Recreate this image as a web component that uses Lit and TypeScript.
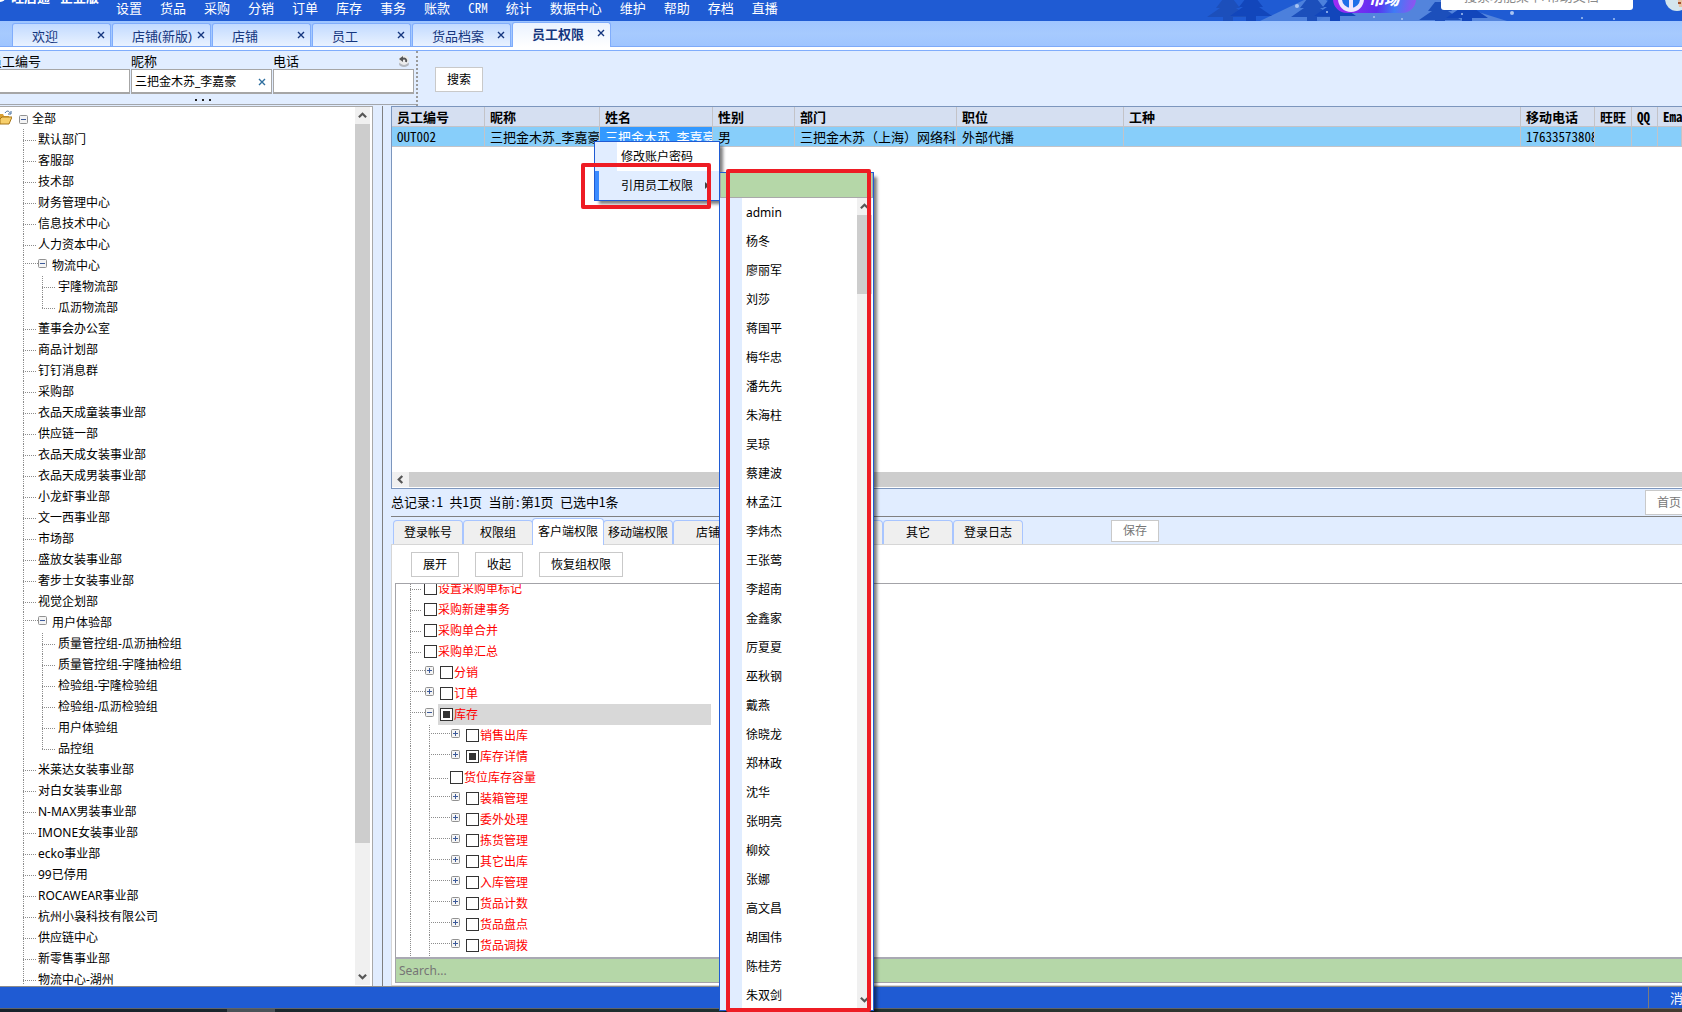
import { LitElement, html, css, svg, nothing } from "lit";
import { customElement, property } from "lit/decorators.js";
import { classMap } from "lit/directives/class-map.js";

interface Dept {
  name: string;
  children?: string[];
}

interface Perm {
  name: string;
  level: number;
  toggle?: "plus" | "minus";
  partial?: boolean;
  selected?: boolean;
}

const MENUS = ["设置", "货品", "采购", "分销", "订单", "库存", "事务", "账款", "CRM", "统计", "数据中心", "维护", "帮助", "存档", "直播"];
const PAGES = ["欢迎", "店铺(新版)", "店铺", "员工", "货品档案", "员工权限"];

const DEPTS: Dept[] = [
  { name: "默认部门" },
  { name: "客服部" },
  { name: "技术部" },
  { name: "财务管理中心" },
  { name: "信息技术中心" },
  { name: "人力资本中心" },
  { name: "物流中心", children: ["宇隆物流部", "瓜沥物流部"] },
  { name: "董事会办公室" },
  { name: "商品计划部" },
  { name: "钉钉消息群" },
  { name: "采购部" },
  { name: "衣品天成童装事业部" },
  { name: "供应链一部" },
  { name: "衣品天成女装事业部" },
  { name: "衣品天成男装事业部" },
  { name: "小龙虾事业部" },
  { name: "文一西事业部" },
  { name: "市场部" },
  { name: "盛放女装事业部" },
  { name: "奢步士女装事业部" },
  { name: "视觉企划部" },
  {
    name: "用户体验部",
    children: ["质量管控组-瓜沥抽检组", "质量管控组-宇隆抽检组", "检验组-宇隆检验组", "检验组-瓜沥检验组", "用户体验组", "品控组"],
  },
  { name: "米莱达女装事业部" },
  { name: "对白女装事业部" },
  { name: "N-MAX男装事业部" },
  { name: "IMONE女装事业部" },
  { name: "ecko事业部" },
  { name: "99已停用" },
  { name: "ROCAWEAR事业部" },
  { name: "杭州小袅科技有限公司" },
  { name: "供应链中心" },
  { name: "新零售事业部" },
  { name: "物流中心-湖州" },
];

const PERMS: Perm[] = [
  { name: "设置采购单标记", level: 1 },
  { name: "采购新建事务", level: 1 },
  { name: "采购单合并", level: 1 },
  { name: "采购单汇总", level: 1 },
  { name: "分销", level: 1, toggle: "plus" },
  { name: "订单", level: 1, toggle: "plus" },
  { name: "库存", level: 1, toggle: "minus", partial: true, selected: true },
  { name: "销售出库", level: 2, toggle: "plus" },
  { name: "库存详情", level: 2, toggle: "plus", partial: true },
  { name: "货位库存容量", level: 2 },
  { name: "装箱管理", level: 2, toggle: "plus" },
  { name: "委外处理", level: 2, toggle: "plus" },
  { name: "拣货管理", level: 2, toggle: "plus" },
  { name: "其它出库", level: 2, toggle: "plus" },
  { name: "入库管理", level: 2, toggle: "plus" },
  { name: "货品计数", level: 2, toggle: "plus" },
  { name: "货品盘点", level: 2, toggle: "plus" },
  { name: "货品调拨", level: 2, toggle: "plus" },
];

const COLUMNS: { title: string; value: string; cls: string }[] = [
  { title: "员工编号", value: "OUT002", cls: "c-code" },
  { title: "昵称", value: "三把金木苏_李嘉豪", cls: "c-nick" },
  { title: "姓名", value: "三把金木苏_李嘉豪", cls: "c-name" },
  { title: "性别", value: "男", cls: "c-sex" },
  { title: "部门", value: "三把金木苏（上海）网络科", cls: "c-dept" },
  { title: "职位", value: "外部代播", cls: "c-post" },
  { title: "工种", value: "", cls: "c-work" },
  { title: "移动电话", value: "17633573808", cls: "c-phone" },
  { title: "旺旺", value: "", cls: "c-ww" },
  { title: "QQ", value: "", cls: "c-qq" },
  { title: "Email", value: "", cls: "c-mail" },
];

const DETAIL_TABS = ["登录帐号", "权限组", "客户端权限", "移动端权限", "店铺", "", "", "其它", "登录日志"];

const PEOPLE = [
  "admin", "杨冬", "廖丽军", "刘莎", "蒋国平", "梅华忠", "潘先先", "朱海柱", "吴琼", "蔡建波", "林孟江", "李炜杰", "王张莺", "李超南",
  "金鑫家", "厉夏夏", "巫秋钢", "戴燕", "徐晓龙", "郑林政", "沈华", "张明亮", "柳姣", "张娜", "高文昌", "胡国伟", "陈桂芳", "朱双剑",
];

const base = css`
  * {
    box-sizing: border-box;
  }
  button,
  input {
    font: inherit;
    color: inherit;
    margin: 0;
    padding: 0;
    border: 0;
    border-radius: 0;
    background: none;
    outline: none;
  }
  ul {
    list-style: none;
    margin: 0;
    padding: 0;
  }
  svg {
    display: block;
  }
`;

const treeStyles = css`
  .row {
    display: flex;
    height: 21px;
    flex: none;
    line-height: 21px;
    white-space: nowrap;
  }
  .guide,
  .branch {
    flex: none;
    background-repeat: no-repeat;
    background-image: repeating-linear-gradient(to bottom, #8c8c8c 0 1px, transparent 1px 2px),
      repeating-linear-gradient(to right, #8c8c8c 0 1px, transparent 1px 2px);
    background-position: 0 0, 0 11px;
    background-size: 1px 100%, 100% 1px;
  }
  .guide {
    background-size: 1px 100%, 0 0;
  }
  .branch.high {
    background-position: 0 0, 0 8px;
  }
  .branch.last {
    background-size: 1px 12px, 100% 1px;
  }
  .toggle {
    flex: none;
    width: 9px;
    height: 9px;
    margin-top: 4px;
  }
`;

const toggleIcon = (kind: "plus" | "minus") => html`
  <svg width="9" height="9" viewBox="0 0 9 9" aria-hidden="true">
    <rect x=".5" y=".5" width="8" height="8" rx="1" fill="#f4f4f4" stroke="#919191" />
    <path d="M2 4.5h5" stroke="#3c5a9a" />
    ${kind === "plus" ? svg`<path d="M4.5 2v5" stroke="#3c5a9a" />` : nothing}
  </svg>
`;

const closeIcon = html`
  <svg width="8" height="8" viewBox="0 0 8 8" aria-hidden="true">
    <path d="M1 1l6 6M7 1l-6 6" stroke="currentColor" stroke-width="1.4" />
  </svg>
`;

@customElement("scroll-bar")
export class ScrollBar extends LitElement {
  @property({ type: Number }) thumb = 1;
  @property({ type: Number }) rest = 0;
  @property({ type: Boolean, reflect: true }) horizontal = false;

  static styles = [
    base,
    css`
      :host {
        display: flex;
        flex-direction: column;
        flex: none;
        width: 15px;
        background: #f0f0f0;
      }
      :host([horizontal]) {
        flex-direction: row;
        width: auto;
        height: 15px;
      }
      .arrow {
        flex: none;
        width: 15px;
        height: 17px;
        display: grid;
        place-items: center;
        color: #555;
      }
      :host([horizontal]) .arrow {
        width: 17px;
        height: 15px;
      }
      .thumb {
        background: #cdcdcd;
      }
    `,
  ];

  private arrow(d: string, label: string) {
    return html`<button class="arrow" aria-label=${label}>
      <svg width="9" height="9" viewBox="0 0 10 10"><path d=${d} fill="none" stroke="currentColor" stroke-width="2.4" /></svg>
    </button>`;
  }

  render() {
    return html`
      ${this.horizontal ? this.arrow("M7 1L3 5l4 4", "向左") : this.arrow("M1 7l4-4 4 4", "向上")}
      <div class="thumb" style="flex:${this.thumb} 1 0"></div>
      <div style="flex:${this.rest} 1 0"></div>
      ${this.horizontal ? nothing : this.arrow("M1 3l4 4 4-4", "向下")}
    `;
  }
}

@customElement("dept-tree")
export class DeptTree extends LitElement {
  static styles = [
    base,
    treeStyles,
    css`
      :host {
        display: flex;
        background: #fff;
        border: 1px solid #a9a9a9;
        border-left: 0;
        border-bottom: 0;
        padding: 0 2px 1px 0;
        overflow: hidden;
      }
      .rows {
        flex: 1;
        min-width: 0;
        padding-top: 1px;
        overflow: hidden;
      }
      .child {
        padding-left: 23px;
      }
      .root .toggle {
        margin: 7px 4px 0 7px;
      }
      .root svg {
        flex: none;
      }
      .folder {
        margin-top: 2px;
        width: 12px;
      }
      .guide {
        width: 19px;
      }
      .branch {
        width: 13px;
        margin-right: 2px;
      }
      .branch.high {
        width: 15px;
        margin-right: 0;
      }
      .child .toggle {
        margin-right: 5px;
      }
      .nested .branch {
        width: 14px;
      }
    `,
  ];

  render() {
    return html`
      <div class="rows" role="tree">
        <div class="row root">
          <svg class="folder" width="12" height="15" viewBox="0 0 12 15" aria-hidden="true">
            <path d="M0 4h3l1 2h5v3H0z" fill="#d9a033" />
            <path d="M0 14V9l2-2h10l-3 7z" fill="#f7cf6b" stroke="#a87618" />
            <path d="M5 3c2-3 4-2 5 0M11 1v3H8" fill="none" stroke="#3f6a9c" />
          </svg>
          <button class="toggle" aria-label="收起">${toggleIcon("minus")}</button>
          <span>全部</span>
        </div>
        ${DEPTS.map(
          (d) => html`
            <div class="row child">
              <span class=${classMap({ branch: true, high: !!d.children })}></span>
              ${d.children ? html`<button class="toggle" aria-label="收起">${toggleIcon("minus")}</button>` : nothing}
              <span>${d.name}</span>
            </div>
            ${(d.children ?? []).map(
              (c, i, all) => html`
                <div class="row child nested">
                  <span class="guide"></span>
                  <span class=${classMap({ branch: true, last: i === all.length - 1 })}></span>
                  <span>${c}</span>
                </div>
              `,
            )}
          `,
        )}
      </div>
      <scroll-bar .thumb=${718} .rest=${125}></scroll-bar>
    `;
  }
}

@customElement("staff-grid")
export class StaffGrid extends LitElement {
  static styles = [
    base,
    css`
      :host {
        display: flex;
        flex-direction: column;
        height: 383px;
        flex: none;
        padding-bottom: 1px;
        border: 1px solid #7c96bd;
        border-right: 0;
        background: #fff;
        overflow: hidden;
        font-family: "Noto Sans Mono CJK SC", "Liberation Mono", "Noto Sans CJK SC", monospace;
        font-size: 13px;
      }
      .body {
        flex: 1;
      }
      table {
        width: 100%;
        table-layout: fixed;
        border-collapse: separate;
        border-spacing: 0;
      }
      th,
      td {
        height: 20px;
        padding: 0 0 0 5px;
        line-height: 19px;
        text-align: left;
        white-space: nowrap;
        overflow: hidden;
        border-right: 1px solid #c3c3c8;
        border-bottom: 1px solid #c3c3c8;
      }
      th {
        background: #d5dff1;
        font-weight: 700;
      }
      td {
        background: #87cefa;
      }
      .current {
        background: #3399ff;
        color: #fff;
      }
      .c-code { width: 93px; }
      .c-nick { width: 115px; }
      .c-name { width: 113px; }
      .c-sex { width: 82px; }
      .c-dept { width: 162px; }
      .c-post { width: 167px; }
      .c-phone { width: 74px; }
      .c-ww { width: 37px; }
      .c-qq { width: 26px; }
      .c-mail { width: 24px; border-right: 0; }
    `,
  ];

  render() {
    return html`
      <div class="body">
        <table>
          <thead>
            <tr>${COLUMNS.map((c) => html`<th class=${c.cls}>${c.title}</th>`)}</tr>
          </thead>
          <tbody>
            <tr>${COLUMNS.map((c) => html`<td class=${classMap({ current: c.cls === "c-name" })}>${c.value}</td>`)}</tr>
          </tbody>
        </table>
      </div>
      <scroll-bar horizontal></scroll-bar>
    `;
  }
}

@customElement("perm-tree")
export class PermTree extends LitElement {
  static styles = [
    base,
    treeStyles,
    css`
      :host {
        display: flex;
        flex-direction: column;
        flex: 1;
        min-height: 0;
        border: 1px solid #a3a3a8;
        border-right: 0;
        background: #fff;
      }
      .rows {
        flex: 1;
        min-height: 0;
        display: flex;
        flex-direction: column;
        justify-content: flex-end;
        overflow: hidden;
        padding: 0 0 1px 14px;
        color: #f00;
      }
      .guide {
        width: 19px;
      }
      .branch {
        width: 12px;
      }
      .branch.high {
        width: 15px;
      }
      .deep .branch {
        width: 19px;
      }
      .deep .branch.high {
        width: 22px;
      }
      .toggle {
        margin-right: 4px;
      }
      .node {
        display: flex;
        align-items: center;
        gap: 1px;
        padding-left: 2px;
      }
      .selected {
        width: 273px;
        background: #d8d8d8;
      }
      .box {
        appearance: none;
        flex: none;
        width: 13px;
        height: 13px;
        border: 1px solid #333;
        background: #fff;
      }
      .box:indeterminate {
        background: #333;
        box-shadow: inset 0 0 0 2px #fff;
      }
      .search {
        flex: none;
        height: 25px;
        padding-left: 3px;
        border-top: 2px solid #a9a9b3;
        background: #b5d7a8;
      }
      .search::placeholder {
        color: #757575;
        opacity: 1;
      }
    `,
  ];

  render() {
    return html`
      <div class="rows" role="tree">
        ${PERMS.map(
          (p) => html`
            <div class=${classMap({ row: true, deep: p.level === 2 })}>
              ${p.level === 2 ? html`<span class="guide"></span>` : nothing}
              <span class=${classMap({ branch: true, high: !!p.toggle })}></span>
              ${p.toggle ? html`<button class="toggle" aria-label=${p.toggle === "plus" ? "展开" : "收起"}>${toggleIcon(p.toggle)}</button>` : nothing}
              <label class=${classMap({ node: true, selected: !!p.selected })}>
                <input class="box" type="checkbox" .indeterminate=${!!p.partial} />${p.name}
              </label>
            </div>
          `,
        )}
      </div>
      <input class="search" type="text" placeholder="Search..." aria-label="Search" />
    `;
  }
}

@customElement("context-menu")
export class ContextMenu extends LitElement {
  static styles = [
    base,
    css`
      :host {
        display: block;
      }
      .menu,
      .submenu {
        position: absolute;
        border: 1px solid #1f5bd3;
        background: linear-gradient(to right, #e1edff 22px, #fff 22px);
        box-shadow: 4px 4px 3px -1px rgba(0, 0, 0, 0.5);
      }
      .menu {
        left: 594px;
        top: 141px;
        width: 126px;
      }
      .item {
        display: block;
        width: 100%;
        height: 29px;
        padding-left: 26px;
        text-align: left;
        line-height: 28px;
        white-space: nowrap;
      }
      .menu .active {
        display: flex;
        align-items: center;
        justify-content: space-between;
        padding: 0 10px 0 22px;
        border-left: 4px solid #3b8bff;
        background: #e1edff;
      }
      .submenu {
        left: 719px;
        top: 172px;
        bottom: 1px;
        width: 155px;
        display: flex;
        flex-direction: column;
      }
      .filter {
        flex: none;
        height: 25px;
        width: 100%;
        padding: 0 4px;
        border: 1px solid #a9a9a9;
        border-top-width: 0;
        background: #b5d7a8;
      }
      .list {
        flex: 1;
        min-height: 0;
        display: flex;
        padding: 0 1px 2px 0;
      }
      .people {
        flex: 1;
        overflow: hidden;
      }
      .mark {
        position: absolute;
        border: 4px solid #ee1c24;
        border-radius: 2px;
        pointer-events: none;
      }
      .mark-item {
        left: 581px;
        top: 163px;
        width: 130px;
        height: 46px;
      }
      .mark-list {
        left: 726px;
        top: 169px;
        bottom: 0;
        width: 145px;
      }
    `,
  ];

  render() {
    return html`
      <div class="menu" role="menu">
        <button class="item" role="menuitem">修改账户密码</button>
        <button class="item active" role="menuitem">
          引用员工权限
          <svg width="4" height="7" viewBox="0 0 4 7" aria-hidden="true"><path d="M0 0l4 3.5L0 7z" fill="#444" /></svg>
        </button>
      </div>
      <div class="submenu" role="menu">
        <input class="filter" type="text" aria-label="筛选员工" />
        <div class="list">
          <div class="people">
            ${PEOPLE.map((p) => html`<button class="item" role="menuitem">${p}</button>`)}
          </div>
          <scroll-bar .thumb=${79} .rest=${700}></scroll-bar>
        </div>
      </div>
      <div class="mark mark-item"></div>
      <div class="mark mark-list"></div>
    `;
  }
}

@customElement("app-root")
export class AppRoot extends LitElement {
  static styles = [
    base,
    css`
      :host {
        position: relative;
        display: flex;
        flex-direction: column;
        height: 100vh;
        overflow: hidden;
        background: #e1edff;
        color: #000;
        font-family: "Noto Sans", "Noto Sans CJK SC", sans-serif;
        font-size: 12px;
        line-height: 16px;
      }
      .top {
        position: relative;
        flex: none;
        display: flex;
        height: 21px;
        overflow: hidden;
        background: #1f5bd3;
        color: #fff;
      }
      .scene {
        position: absolute;
        right: 0;
        top: 0;
      }
      .brand {
        display: flex;
        gap: 4px;
        width: 116px;
        flex: none;
        margin-top: -11px;
        font-size: 13px;
        font-weight: 700;
        white-space: nowrap;
      }
      .brand svg {
        flex: none;
        margin: -2px 0 0 -6px;
      }
      .edition {
        margin-left: 6px;
      }
      .menus {
        display: flex;
        gap: 18px;
        font-family: "Noto Sans Mono CJK SC", "Liberation Mono", "Noto Sans CJK SC", monospace;
        font-size: 13px;
        white-space: nowrap;
      }
      .menus button {
        height: 16px;
        line-height: 16px;
      }
      .tools {
        position: relative;
        display: flex;
        align-items: flex-start;
        margin-left: auto;
        margin-right: -7px;
      }
      .market {
        display: flex;
        align-items: center;
        gap: 4px;
        width: 83px;
        height: 28px;
        margin: -15px 25px 0 0;
        padding-left: 5px;
        border-radius: 14px;
        background: linear-gradient(100deg, #a42bf5, #5b2ff0 55%, #3f7cf5 75%, #9a4df0);
        font-size: 15px;
        font-style: italic;
        font-weight: 900;
        line-height: 18px;
      }
      .find {
        width: 192px;
        height: 28px;
        margin: -18px 32px 0 0;
        padding: 0 0 0 23px;
        border-radius: 3px;
        background: #fff;
        color: #777;
        font-size: 13px;
      }
      .find::placeholder {
        color: #888;
        opacity: 1;
      }
      .avatar {
        width: 24px;
        height: 24px;
        margin-top: -13px;
      }

      .pages {
        flex: none;
        display: flex;
        align-items: flex-end;
        gap: 1px;
        height: 26px;
        padding-left: 12px;
        background: linear-gradient(#9fc5ff, #a6cafe 50%, #9fc5ff);
        border-bottom: 1px solid #7eaaf8;
      }
      .page {
        display: flex;
        align-items: center;
        justify-content: space-between;
        width: 99px;
        height: 23px;
        padding: 2px 5px 0 19px;
        border: 1px solid #80adfc;
        border-bottom: 0;
        border-radius: 3px 3px 0 0;
        background: linear-gradient(#c2daff, #e9f2ff);
        color: #15367e;
        font-size: 13px;
        white-space: nowrap;
      }
      .page.on {
        height: 25px;
        margin-bottom: -1px;
        padding-top: 0;
        padding-bottom: 2px;
        background: linear-gradient(#eaf2ff, #fff);
        font-weight: 700;
      }
      .page .close {
        width: 8px;
        height: 8px;
        margin-bottom: 2px;
      }
      .rule {
        flex: none;
        height: 4px;
        background: #fff;
        border-bottom: 1px solid #80adfc;
      }

      .filters {
        flex: none;
        display: flex;
        height: 55px;
      }
      .query {
        width: 418px;
        padding-top: 3px;
        border-right: 2px dotted #9a9a9a;
        overflow: hidden;
        position: relative;
      }
      .fields {
        display: flex;
        gap: 1px;
        margin-left: -11px;
      }
      .field {
        display: flex;
        flex-direction: column;
        width: 141px;
        font-size: 13px;
      }
      .box {
        display: flex;
        align-items: center;
        height: 25px;
        padding: 1px 5px 0 3px;
        border: 1px solid #a6a6a6;
        border-bottom-width: 2px;
        background: #fff;
        font-size: 12px;
      }
      .box input {
        flex: 1;
        min-width: 0;
      }
      .clear {
        width: 8px;
        height: 8px;
        color: #2f6f9f;
      }
      label {
        height: 15px;
        line-height: 15px;
      }
      .more {
        display: flex;
        align-items: center;
        justify-content: center;
        gap: 5px;
        width: 405px;
        height: 10px;
        padding-top: 2px;
      }
      .more i {
        width: 2px;
        height: 2px;
        background: #222;
      }
      .edge {
        height: 1px;
        background: #a3a6ab;
      }
      .undo {
        position: absolute;
        left: 397px;
        top: 4px;
      }
      .btn {
        flex: none;
        width: 48px;
        height: 25px;
        border: 1px solid #c9c9c9;
        background: #fff;
        line-height: 22px;
        text-align: center;
        white-space: nowrap;
      }
      .btn.wide {
        width: 84px;
      }
      .btn.off {
        color: #777;
      }
      .btn.go {
        margin: 16px 0 0 17px;
      }

      .main {
        flex: 1;
        min-height: 0;
        display: flex;
        border-bottom: 1px solid #8b8b8b;
      }
      .left {
        width: 373px;
        flex: none;
      }
      .split {
        flex: none;
        width: 18px;
        background: linear-gradient(#808080, #808080) 9px 0 / 1px 100% no-repeat;
      }
      .right {
        flex: 1;
        min-width: 0;
        display: flex;
        flex-direction: column;
      }
      .pager {
        flex: none;
        display: flex;
        align-items: center;
        justify-content: space-between;
        height: 28px;
        padding-bottom: 1px;
        border-bottom: 1px solid #808080;
        font-family: "Noto Sans Mono CJK SC", "Liberation Mono", "Noto Sans CJK SC", monospace;
        font-size: 13px;
        white-space: nowrap;
        overflow: hidden;
      }
      .pager .btn {
        margin-right: -11px;
        font-size: 12px;
      }
      .tabs {
        flex: none;
        display: flex;
        align-items: flex-end;
        height: 28px;
        padding-left: 2px;
        border-bottom: 1px solid #d6d6d6;
      }
      .tab {
        flex: none;
        width: 70px;
        height: 24px;
        border: 1px solid #a8c5ff;
        border-bottom: 0;
        border-radius: 4px 4px 0 0;
        background: #efefef;
        white-space: nowrap;
        text-align: center;
      }
      .tab.on {
        width: 72px;
        height: 27px;
        margin: 0 -1px -1px;
        background: #fff;
        z-index: 1;
      }
      .tabs .btn {
        height: 22px;
        line-height: 20px;
        margin: 0 0 2px 88px;
      }
      .panel {
        flex: 1;
        min-height: 0;
        display: flex;
        flex-direction: column;
        padding: 7px 0 2px 3px;
        background: #fff;
        border-left: 1px solid #d6d6d6;
        border-bottom: 1px solid #d6d6d6;
      }
      .actions {
        flex: none;
        display: flex;
        gap: 16px;
        padding: 0 0 6px 16px;
      }

      .status {
        flex: none;
        display: flex;
        justify-content: flex-end;
        height: 21px;
        background: #1f5bd3;
        color: #fff;
        font-size: 13px;
      }
      .status button {
        width: 34px;
        padding-left: 21px;
        border-left: 1px solid #7c7c7c;
        text-align: left;
        white-space: nowrap;
        overflow: hidden;
      }
      .taskbar {
        flex: none;
        display: flex;
        height: 4px;
        padding-left: 227px;
        border-top: 1px solid #5f6468;
        background: linear-gradient(to right, #18222b, #20322f 50%, #443a30);
      }
      .taskbar i {
        width: 48px;
        background: #4b5358;
      }
    `,
  ];

  private scene() {
    const tree = (x: number, y: number, fill: string) => svg`
      <path transform="translate(${x} ${y})" fill=${fill} d="M-5-18H5L12-9H8L21 0H5V6H-5V0H-21L-8-9H-12z" />`;
    const dots = [[97, 6, 2], [174, 17, 1], [202, 19, 1], [312, 13, 2], [382, 18, 1], [262, 14, 1], [414, 19, 1], [127, 12, 1]];
    return html`
      <svg class="scene" width="482" height="21" viewBox="0 0 482 21" aria-hidden="true">
        <path d="M60 21L104 0h22L150 21z" fill="#4c80dc" />
        <path d="M118 21L150 0h90L307 21z" fill="#5384dc" />
        ${tree(28, 17, "#1c4fbb")} ${tree(51, 16, "#1246bb")} ${tree(112, 17, "#1c4fbb")} ${tree(135, 16, "#1246bb")}
        ${tree(240, 20, "#1c4fbb")} ${tree(267, 18, "#1246bb")}
        ${dots.map(([x, y, r]) => svg`<circle cx=${x} cy=${y} r=${r} fill="#a9c4f2" />`)}
      </svg>
    `;
  }

  render() {
    return html`
      <header class="top">
        ${this.scene()}
        <div class="brand">
          <svg width="13" height="16" viewBox="0 0 13 16" aria-hidden="true"><circle cx="6" cy="9" r="6" fill="#fff" /></svg>
          <span>旺店通</span><span class="edition">企业版</span>
        </div>
        <nav class="menus">${MENUS.map((m) => html`<button>${m}</button>`)}</nav>
        <div class="tools">
          <button class="market">
            <svg width="27" height="27" viewBox="0 0 27 27" aria-hidden="true">
              <circle cx="13" cy="13" r="11" fill="#1f6fe8" stroke="#efe6ff" stroke-width="4" />
              <path d="M13 2v22" stroke="#efe6ff" stroke-width="4" />
            </svg>
            市场
          </button>
          <input class="find" type="text" aria-label="搜索" placeholder="搜索功能菜单/帮助文档" />
          <svg class="avatar" width="24" height="24" viewBox="0 0 24 24" aria-hidden="true">
            <circle cx="12" cy="12" r="12" fill="#d4e6ee" />
            <path d="M12 8h8v12h-6z" fill="#e8c3a4" />
            <path d="M13 15h3v2h-3z" fill="#a34e2a" />
          </svg>
        </div>
      </header>

      <div class="pages">
        ${PAGES.map(
          (p, i) => html`
            <div class=${classMap({ page: true, on: i === PAGES.length - 1 })}>
              <button>${p}</button><button class="close" aria-label="关闭">${closeIcon}</button>
            </div>
          `,
        )}
      </div>
      <div class="rule"></div>

      <section class="filters">
        <div class="query">
          <div class="fields">
            <div class="field">
              <label for="code">员工编号</label>
              <div class="box"><input id="code" type="text" /></div>
            </div>
            <div class="field">
              <label for="nick">昵称</label>
              <div class="box">
                <input id="nick" type="text" .value=${"三把金木苏_李嘉豪"} />
                <button class="clear" aria-label="清除">${closeIcon}</button>
              </div>
            </div>
            <div class="field">
              <label for="phone">电话</label>
              <div class="box"><input id="phone" type="text" /></div>
            </div>
          </div>
          <div class="more"><i></i><i></i><i></i></div>
          <div class="edge"></div>
          <button class="undo" aria-label="重置">
            <svg width="13" height="12" viewBox="0 0 13 12">
              <ellipse cx="7" cy="9" rx="5" ry="3" fill="#b4b8be" />
              <circle cx="7" cy="5" r="5" fill="#ececec" />
              <path d="M9 7c1-3-1-4-4-3" fill="none" stroke="#555" stroke-width="2" />
              <path d="M6 1v6L2 4z" fill="#555" />
            </svg>
          </button>
        </div>
        <button class="btn go">搜索</button>
      </section>

      <main class="main">
        <dept-tree class="left"></dept-tree>
        <div class="split"></div>
        <section class="right">
          <staff-grid></staff-grid>
          <div class="pager">
            <span>总记录:1 共1页 当前:第1页 已选中1条</span>
            <button class="btn off">首页</button>
          </div>
          <div class="tabs">
            ${DETAIL_TABS.map((t, i) => html`<button class=${classMap({ tab: true, on: i === 2 })}>${t}</button>`)}
            <button class="btn off">保存</button>
          </div>
          <div class="panel">
            <div class="actions">
              <button class="btn">展开</button>
              <button class="btn">收起</button>
              <button class="btn wide">恢复组权限</button>
            </div>
            <perm-tree></perm-tree>
          </div>
        </section>
      </main>

      <footer class="status"><button>消息</button></footer>
      <div class="taskbar"><i></i></div>

      <context-menu></context-menu>
    `;
  }
}
